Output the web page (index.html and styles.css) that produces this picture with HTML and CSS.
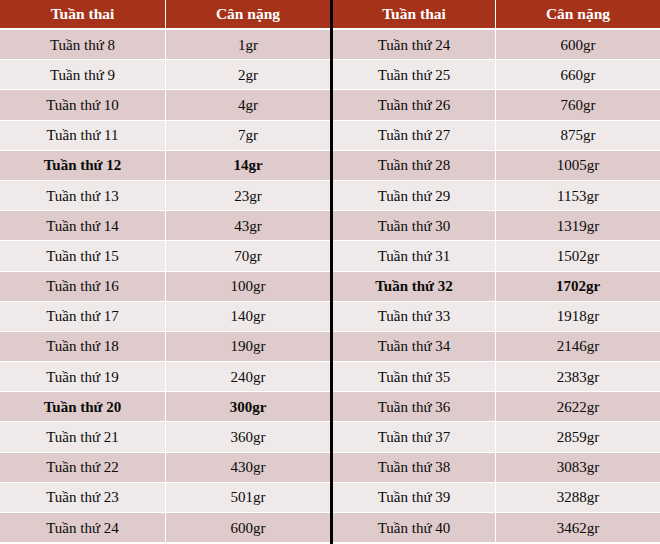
FILE: index.html
```html
<!DOCTYPE html>
<html lang="vi">
<head>
<meta charset="utf-8">
<title>Cân nặng thai nhi</title>
<link rel="stylesheet" href="styles.css">
</head>
<body>
<div class="page">
  <div class="tbl left">
    <div class="hd">Tuần thai</div><div class="hd">Cân nặng</div>
    <div class="c d">Tuần thứ 8</div><div class="c d">1gr</div>
    <div class="c l">Tuần thứ 9</div><div class="c l">2gr</div>
    <div class="c d">Tuần thứ 10</div><div class="c d">4gr</div>
    <div class="c l">Tuần thứ 11</div><div class="c l">7gr</div>
    <div class="c d b">Tuần thứ 12</div><div class="c d b">14gr</div>
    <div class="c l">Tuần thứ 13</div><div class="c l">23gr</div>
    <div class="c d">Tuần thứ 14</div><div class="c d">43gr</div>
    <div class="c l">Tuần thứ 15</div><div class="c l">70gr</div>
    <div class="c d">Tuần thứ 16</div><div class="c d">100gr</div>
    <div class="c l">Tuần thứ 17</div><div class="c l">140gr</div>
    <div class="c d">Tuần thứ 18</div><div class="c d">190gr</div>
    <div class="c l">Tuần thứ 19</div><div class="c l">240gr</div>
    <div class="c d b">Tuần thứ 20</div><div class="c d b">300gr</div>
    <div class="c l">Tuần thứ 21</div><div class="c l">360gr</div>
    <div class="c d">Tuần thứ 22</div><div class="c d">430gr</div>
    <div class="c l">Tuần thứ 23</div><div class="c l">501gr</div>
    <div class="c d">Tuần thứ 24</div><div class="c d">600gr</div>
  </div>
  <div class="divider"></div>
  <div class="tbl right">
    <div class="hd">Tuần thai</div><div class="hd">Cân nặng</div>
    <div class="c d">Tuần thứ 24</div><div class="c d">600gr</div>
    <div class="c l">Tuần thứ 25</div><div class="c l">660gr</div>
    <div class="c d">Tuần thứ 26</div><div class="c d">760gr</div>
    <div class="c l">Tuần thứ 27</div><div class="c l">875gr</div>
    <div class="c d">Tuần thứ 28</div><div class="c d">1005gr</div>
    <div class="c l">Tuần thứ 29</div><div class="c l">1153gr</div>
    <div class="c d">Tuần thứ 30</div><div class="c d">1319gr</div>
    <div class="c l">Tuần thứ 31</div><div class="c l">1502gr</div>
    <div class="c d b">Tuần thứ 32</div><div class="c d b">1702gr</div>
    <div class="c l">Tuần thứ 33</div><div class="c l">1918gr</div>
    <div class="c d">Tuần thứ 34</div><div class="c d">2146gr</div>
    <div class="c l">Tuần thứ 35</div><div class="c l">2383gr</div>
    <div class="c d">Tuần thứ 36</div><div class="c d">2622gr</div>
    <div class="c l">Tuần thứ 37</div><div class="c l">2859gr</div>
    <div class="c d">Tuần thứ 38</div><div class="c d">3083gr</div>
    <div class="c l">Tuần thứ 39</div><div class="c l">3288gr</div>
    <div class="c d">Tuần thứ 40</div><div class="c d">3462gr</div>
  </div>
</div>
</body>
</html>
```

FILE: styles.css
```css
html, body {
  margin: 0;
  padding: 0;
  background: #ffffff;
}
body {
  font-family: "Liberation Serif", "Times New Roman", serif;
  font-size: 15px;
  color: #0a0a0a;
}
.page {
  display: flex;
  width: 660px;
  height: 544px;
  background: #ffffff;
}
.tbl {
  display: grid;
  grid-template-rows: 29px;
  grid-auto-rows: 29.2px;
  column-gap: 1px;
  row-gap: 1px;
  align-content: start;
}
.left {
  grid-template-columns: 165px 164px;
  width: 330px;
}
.right {
  grid-template-columns: 162px 164px;
  width: 327px;
}
.divider {
  width: 3px;
  background: #000000;
  height: 544px;
}
.hd {
  background: #a63219;
  color: #ffffff;
  font-weight: bold;
  font-size: 15.5px;
  height: 28px;
  margin-bottom: 1px;
  display: flex;
  align-items: center;
  justify-content: center;
}
.c {
  display: flex;
  align-items: center;
  justify-content: center;
  padding-top: 1px;
}
.d {
  background: #dfcbcb;
}
.l {
  background: #f0e9e9;
}
.b {
  font-weight: bold;
}
```
